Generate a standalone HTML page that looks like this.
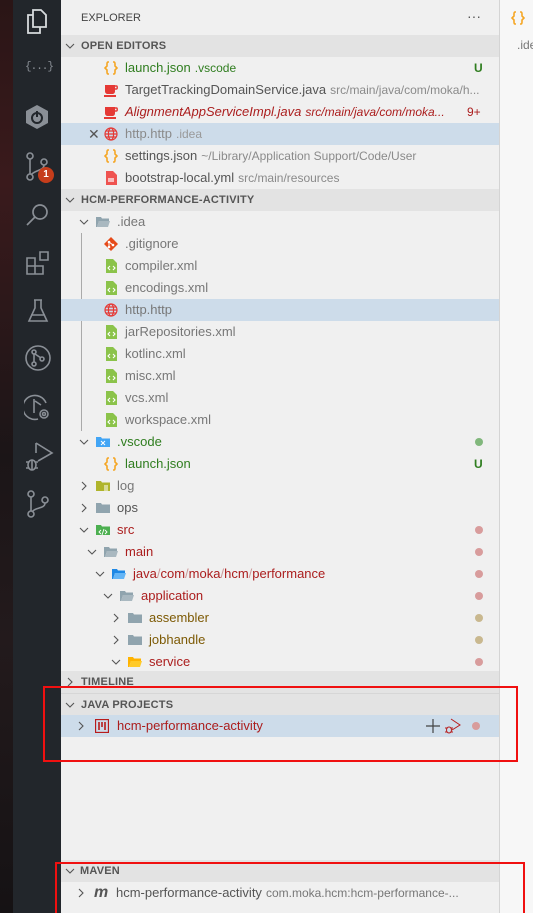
<!DOCTYPE html>
<html><head><meta charset="utf-8"><style>
*{margin:0;padding:0;box-sizing:border-box}
html,body{width:533px;height:913px;overflow:hidden}
body{position:relative;background:#f0f0f0;font-family:"Liberation Sans",Helvetica,sans-serif;font-size:13px;color:#616161}
#strip{position:absolute;left:0;top:0;width:13px;height:913px;background:linear-gradient(180deg,#2a1516 0%,#3a1a1c 20%,#1b1517 50%,#231a1c 70%,#151214 100%)}
#act{position:absolute;left:13px;top:0;width:48px;height:913px;background:#22262b;overflow:hidden}
#side{position:absolute;left:61px;top:0;width:438px;height:913px;background:#f0f0f0}
#edit{position:absolute;left:499px;top:0;width:34px;height:913px;background:#f7f7f7;border-left:1px solid #d4d4d4}
.r{position:absolute;left:61px;width:438px;height:22px;line-height:22px;white-space:nowrap}
.sel{background:#cddcea}
.hd{background:#e3e3e3;font-weight:bold;font-size:11px;color:#555;letter-spacing:.2px}
.ab{position:absolute}
.t{position:absolute;top:0}
.d{color:#8a8a8a;font-size:12px;margin-left:4px}
.dot{position:absolute;left:414px;top:7px;width:8px;height:8px;border-radius:4px}
.g{color:#2f7d1f}.rd{color:#ab1d1d}.ol{color:#7d5a05}
.chev{position:absolute;top:0;width:10px;height:22px}
.ic{position:absolute;top:4px;width:14px;height:14px}
</style></head><body>
<div id="strip"></div>
<div id="act">
<svg class="ab" style="left:12px;top:9px" width="24" height="26" viewBox="0 0 24 26" fill="none" stroke="#d7dadd" stroke-width="1.8"><path d="M8 1h8l5 5v12H8z"/><path d="M8 6H3v18h12v-6"/></svg>
<div class="ab" style="left:12px;top:61px;color:#8a8f96;font-size:11px;font-family:'Liberation Mono',monospace;letter-spacing:-1px">{...}</div>
<svg class="ab" style="left:10px;top:103px" width="28" height="28" viewBox="0 0 28 28"><path d="M14 2l11 6v12l-11 6-11-6V8z" fill="#8a8f96"/><circle cx="14" cy="15" r="5" fill="none" stroke="#22262b" stroke-width="2"/><path d="M14 8v6" stroke="#22262b" stroke-width="2"/></svg>
<svg class="ab" style="left:12px;top:152px" width="26" height="30" viewBox="0 0 26 30" fill="none" stroke="#8a8f96" stroke-width="1.6"><circle cx="5" cy="4" r="3"/><circle cx="5" cy="25" r="3"/><circle cx="19" cy="10" r="3"/><path d="M5 7v15M19 13c0 6-10 5-13 10"/></svg>
<div class="ab" style="left:25px;top:167px;width:16px;height:16px;border-radius:8px;background:#c63d1b;color:#fff;font-size:10px;font-weight:bold;text-align:center;line-height:16px">1</div>
<svg class="ab" style="left:12px;top:202px" width="26" height="26" viewBox="0 0 26 26" fill="none" stroke="#8a8f96" stroke-width="1.7"><circle cx="15" cy="10" r="7"/><path d="M10 15l-8 8"/></svg>
<svg class="ab" style="left:12px;top:250px" width="26" height="26" viewBox="0 0 26 26" fill="none" stroke="#8a8f96" stroke-width="1.6"><path d="M2 8h8v8H2zM10 16h8v8h-8zM2 16h8v8H2zM15 2h8v8h-8z"/></svg>
<svg class="ab" style="left:13px;top:298px" width="24" height="26" viewBox="0 0 24 26" fill="none" stroke="#8a8f96" stroke-width="1.6"><path d="M8 2h8M9 2v8L3 23h18L15 10V2M5 17h14"/></svg>
<svg class="ab" style="left:11px;top:344px" width="28" height="28" viewBox="0 0 28 28" fill="none" stroke="#8a8f96" stroke-width="1.6"><circle cx="14" cy="14" r="12"/><circle cx="10" cy="8" r="2"/><circle cx="10" cy="20" r="2"/><circle cx="18" cy="15" r="2"/><path d="M10 10v8M11 10l6 4"/></svg>
<svg class="ab" style="left:11px;top:393px" width="30" height="30" viewBox="0 0 30 30" fill="none" stroke="#8a8f96" stroke-width="1.6"><path d="M22 10A12 12 0 1 0 14 26"/><path d="M10 6v14M11 8l6 4"/><circle cx="20" cy="21" r="4"/><circle cx="20" cy="21" r="1.5"/></svg>
<svg class="ab" style="left:11px;top:440px" width="30" height="32" viewBox="0 0 30 32" fill="none" stroke="#8a8f96" stroke-width="1.6"><path d="M12 3l16 10-14 8"/><path d="M12 3v10"/><ellipse cx="8" cy="25" rx="4" ry="5"/><path d="M2 22h3M11 22h3M2 28h3M11 28h3M8 20v10"/></svg>
<svg class="ab" style="left:13px;top:490px" width="24" height="28" viewBox="0 0 24 28" fill="none" stroke="#8a8f96" stroke-width="1.6"><circle cx="5" cy="4" r="3"/><circle cx="5" cy="24" r="3"/><circle cx="19" cy="10" r="3"/><path d="M5 7v14M19 13c0 6-10 4-13 9"/></svg>
</div>
<div id="side"></div>
<div id="edit"><svg style="position:absolute;left:11px;top:11px" width="14" height="14" viewBox="0 0 14 14" fill="none" stroke="#f5a623" stroke-width="1.6"><path d="M5 1H4C3 1 3 2 3 3v2L1 7l2 2v2c0 1 0 2 1 2h1M9 1h1c1 0 1 1 1 2v2l2 2-2 2v2c0 1 0 2-1 2H9"/></svg><div style="position:absolute;left:17px;top:38px;font-size:12px;color:#777">.ide</div></div>

<div class="r" style="top:7px"><span class="t" style="left:20px;font-size:11px;color:#444;line-height:22px">EXPLORER</span><span class="t" style="left:406px;color:#555;font-size:14px;line-height:18px">···</span></div>

<svg width="0" height="0" style="position:absolute"><defs>
<symbol id="cd" viewBox="0 0 10 22"><path d="M1 9l4 4 4-4" fill="none" stroke="#555" stroke-width="1.1"/></symbol>
<symbol id="cr" viewBox="0 0 10 22"><path d="M3 7l4 4-4 4" fill="none" stroke="#555" stroke-width="1.1"/></symbol>
<symbol id="js" viewBox="0 0 14 14"><path d="M5 1H4C3 1 3 2 3 3v2L1 7l2 2v2c0 1 0 2 1 2h1M9 1h1c1 0 1 1 1 2v2l2 2-2 2v2c0 1 0 2-1 2H9" fill="none" stroke="#f5a623" stroke-width="1.6"/></symbol>
<symbol id="jv" viewBox="0 0 14 14"><path d="M1 2h10v6c0 2-1 3-3 3H4c-2 0-3-1-3-3z" fill="#e53935"/><path d="M11 3h1.5c1 0 1 3 0 3H11" fill="none" stroke="#e53935" stroke-width="1.4"/><rect x="0" y="12" width="12" height="2" fill="#e53935"/></symbol>
<symbol id="gl" viewBox="0 0 14 14"><g fill="none" stroke="#e53935" stroke-width="1.2"><circle cx="7" cy="7" r="6"/><ellipse cx="7" cy="7" rx="2.6" ry="6"/><path d="M1 7h12M2 4h10M2 10h10"/></g></symbol>
<symbol id="ym" viewBox="0 0 14 14"><path d="M2 0h7l4 4v10H2z" fill="#ef5350"/><path d="M4 8h6M4 10h6" stroke="#fff" stroke-width="1.2"/></symbol>
<symbol id="xm" viewBox="0 0 14 14"><path d="M2 0h7l4 4v10H2z" fill="#8bc34a"/><path d="M6 7l-2 2 2 2M9 7l2 2-2 2" fill="none" stroke="#fff" stroke-width="1.1"/></symbol>
<symbol id="gi" viewBox="0 0 14 14"><path d="M7 0l7 7-7 7-7-7z" fill="#e64a19"/><circle cx="5" cy="5" r="1.3" fill="#fff"/><circle cx="9" cy="8" r="1.3" fill="#fff"/><circle cx="5" cy="10" r="1.3" fill="#fff"/><path d="M5 5v5M5 5l4 3" stroke="#fff" stroke-width="1"/></symbol>
<symbol id="fo" viewBox="0 0 14 14"><path d="M0 2h5l1 1.5h8V12H0z" fill="#90a4ae"/></symbol>
<symbol id="fop" viewBox="0 0 14 14"><path d="M0 2h5l1 1.5h7V6H3L1 12H0z" fill="#90a4ae"/><path d="M3 6h11l-2 6H1z" fill="#a9b8c0"/></symbol>
</defs></svg>

<div class="r hd" style="top:35px"><svg class="chev" style="left:4px"><use href="#cd"/></svg><span class="t" style="left:20px">OPEN EDITORS</span></div>
<div class="r" style="top:57px"><svg class="ic" style="left:43px"><use href="#js"/></svg><span class="t g" style="left:64px">launch.json<span class="d" style="color:#2f7d1f">.vscode</span></span><span class="t" style="left:413px;color:#2f7d1f;font-weight:bold;font-size:12px">U</span></div>
<div class="r" style="top:79px"><svg class="ic" style="left:43px"><use href="#jv"/></svg><span class="t" style="left:64px;color:#555">TargetTrackingDomainService.java<span class="d">src/main/java/com/moka/h...</span></span></div>
<div class="r" style="top:101px"><svg class="ic" style="left:43px"><use href="#jv"/></svg><span class="t rd" style="left:64px;font-style:italic">AlignmentAppServiceImpl.java<span class="d" style="color:#ab1d1d">src/main/java/com/moka...</span></span><span class="t rd" style="left:406px;font-size:12px">9+</span></div>
<div class="r sel" style="top:123px"><span class="t" style="left:27px;font-size:14px;color:#555">✕</span><svg class="ic" style="left:43px"><use href="#gl"/></svg><span class="t" style="left:64px;color:#8a8a8a">http.http<span class="d" style="color:#999">.idea</span></span></div>
<div class="r" style="top:145px"><svg class="ic" style="left:43px"><use href="#js"/></svg><span class="t" style="left:64px;color:#555">settings.json<span class="d">~/Library/Application Support/Code/User</span></span></div>
<div class="r" style="top:167px"><svg class="ic" style="left:43px"><use href="#ym"/></svg><span class="t" style="left:64px;color:#555">bootstrap-local.yml<span class="d">src/main/resources</span></span></div>

<div class="r hd" style="top:189px"><svg class="chev" style="left:4px"><use href="#cd"/></svg><span class="t" style="left:20px">HCM-PERFORMANCE-ACTIVITY</span></div>
<div class="r" style="top:211px"><svg class="chev" style="left:18px"><use href="#cd"/></svg><svg class="ic" style="left:35px"><use href="#fop"/></svg><span class="t" style="left:56px;color:#777">.idea</span></div>
<div style="position:absolute;left:81px;top:233px;width:1px;height:198px;background:#aaa"></div>
<div class="r" style="top:233px"><svg class="ic" style="left:43px"><use href="#gi"/></svg><span class="t" style="left:64px;color:#777">.gitignore</span></div>
<div class="r" style="top:255px"><svg class="ic" style="left:43px"><use href="#xm"/></svg><span class="t" style="left:64px;color:#777">compiler.xml</span></div>
<div class="r" style="top:277px"><svg class="ic" style="left:43px"><use href="#xm"/></svg><span class="t" style="left:64px;color:#777">encodings.xml</span></div>
<div class="r sel" style="top:299px"><svg class="ic" style="left:43px"><use href="#gl"/></svg><span class="t" style="left:64px;color:#777">http.http</span></div>
<div class="r" style="top:321px"><svg class="ic" style="left:43px"><use href="#xm"/></svg><span class="t" style="left:64px;color:#777">jarRepositories.xml</span></div>
<div class="r" style="top:343px"><svg class="ic" style="left:43px"><use href="#xm"/></svg><span class="t" style="left:64px;color:#777">kotlinc.xml</span></div>
<div class="r" style="top:365px"><svg class="ic" style="left:43px"><use href="#xm"/></svg><span class="t" style="left:64px;color:#777">misc.xml</span></div>
<div class="r" style="top:387px"><svg class="ic" style="left:43px"><use href="#xm"/></svg><span class="t" style="left:64px;color:#777">vcs.xml</span></div>
<div class="r" style="top:409px"><svg class="ic" style="left:43px"><use href="#xm"/></svg><span class="t" style="left:64px;color:#777">workspace.xml</span></div>
<div class="r" style="top:431px"><svg class="chev" style="left:18px"><use href="#cd"/></svg><svg class="ic" style="left:35px"><path d="M0 2h5l1 1.5h8V12H0z" fill="#42a5f5"/><path d="M5 6l4 4M9 6l-4 4" stroke="#fff" stroke-width="1"/></svg><span class="t g" style="left:56px">.vscode</span><span class="dot" style="background:#81b77c"></span></div>
<div class="r" style="top:453px"><svg class="ic" style="left:43px"><use href="#js"/></svg><span class="t g" style="left:64px">launch.json</span><span class="t" style="left:413px;color:#2f7d1f;font-weight:bold;font-size:12px">U</span></div>
<div class="r" style="top:475px"><svg class="chev" style="left:18px"><use href="#cr"/></svg><svg class="ic" style="left:35px"><path d="M0 2h5l1 1.5h8V12H0z" fill="#afb42b"/><path d="M8 7h4M8 9h4M8 11h4" stroke="#fff" stroke-width=".9"/></svg><span class="t" style="left:56px;color:#777">log</span></div>
<div class="r" style="top:497px"><svg class="chev" style="left:18px"><use href="#cr"/></svg><svg class="ic" style="left:35px"><use href="#fo"/></svg><span class="t" style="left:56px;color:#555">ops</span></div>
<div class="r" style="top:519px"><svg class="chev" style="left:18px"><use href="#cd"/></svg><svg class="ic" style="left:35px"><path d="M0 2h5l1 1.5h8V12H0z" fill="#4caf50"/><path d="M5 7l-2 2 2 2M9 7l2 2-2 2M8 6l-2 6" fill="none" stroke="#fff" stroke-width=".9"/></svg><span class="t rd" style="left:56px">src</span><span class="dot" style="background:#d89c9c"></span></div>
<div class="r" style="top:541px"><svg class="chev" style="left:26px"><use href="#cd"/></svg><svg class="ic" style="left:43px"><use href="#fop"/></svg><span class="t rd" style="left:64px">main</span><span class="dot" style="background:#d89c9c"></span></div>
<div class="r" style="top:563px"><svg class="chev" style="left:34px"><use href="#cd"/></svg><svg class="ic" style="left:51px"><path d="M0 2h5l1 1.5h7V6H3L1 12H0z" fill="#1e88e5"/><path d="M3 6h11l-2 6H1z" fill="#64b5f6"/></svg><span class="t rd" style="left:72px">java<span style="color:#c99">/</span>com<span style="color:#c99">/</span>moka<span style="color:#c99">/</span>hcm<span style="color:#c99">/</span>performance</span><span class="dot" style="background:#d89c9c"></span></div>
<div class="r" style="top:585px"><svg class="chev" style="left:42px"><use href="#cd"/></svg><svg class="ic" style="left:59px"><use href="#fop"/></svg><span class="t rd" style="left:80px">application</span><span class="dot" style="background:#d89c9c"></span></div>
<div class="r" style="top:607px"><svg class="chev" style="left:50px"><use href="#cr"/></svg><svg class="ic" style="left:67px"><use href="#fo"/></svg><span class="t ol" style="left:88px">assembler</span><span class="dot" style="background:#c9b88f"></span></div>
<div class="r" style="top:629px"><svg class="chev" style="left:50px"><use href="#cr"/></svg><svg class="ic" style="left:67px"><use href="#fo"/></svg><span class="t ol" style="left:88px">jobhandle</span><span class="dot" style="background:#c9b88f"></span></div>
<div class="r" style="top:651px"><svg class="chev" style="left:50px"><use href="#cd"/></svg><svg class="ic" style="left:67px"><path d="M0 2h5l1 1.5h7V6H3L1 12H0z" fill="#ffb300"/><path d="M3 6h11l-2 6H1z" fill="#ffca28"/></svg><span class="t rd" style="left:88px">service</span><span class="dot" style="background:#d89c9c"></span></div>

<div class="r hd" style="top:671px;height:22px"><svg class="chev" style="left:4px"><use href="#cr"/></svg><span class="t" style="left:20px">TIMELINE</span></div>
<div class="r hd" style="top:693px;border-top:1px solid #d6d6d6"><svg class="chev" style="left:4px"><use href="#cd"/></svg><span class="t" style="left:20px">JAVA PROJECTS</span></div>
<div class="r sel" style="top:715px"><svg class="chev" style="left:15px"><use href="#cr"/></svg><svg class="ic" style="left:34px;top:4px"><rect x=".5" y=".5" width="13" height="13" fill="none" stroke="#b71c1c" stroke-width="1.3"/><path d="M4 3v8M7 3v5M10 3v8" stroke="#b71c1c" stroke-width="1.6"/></svg><span class="t rd" style="left:56px">hcm-performance-activity</span>
<svg class="ab" style="left:365px;top:4px" width="14" height="14"><path d="M7 0v14M0 7h14" stroke="#444" stroke-width="1.2"/></svg>
<svg class="ab" style="left:384px;top:3px" width="16" height="16" fill="none" stroke="#b71c1c" stroke-width="1"><path d="M6 1l9 6-8 5"/><ellipse cx="4" cy="12" rx="2.5" ry="3"/><path d="M0 10h2M6 10h2M0 14h2M6 14h2"/></svg>
<span class="dot" style="left:411px;background:#d89c9c"></span></div>

<div class="r hd" style="top:860px"><svg class="chev" style="left:4px"><use href="#cd"/></svg><span class="t" style="left:19px">MAVEN</span></div>
<div class="r" style="top:882px"><svg class="chev" style="left:15px"><use href="#cr"/></svg><span class="t" style="left:33px;font-weight:bold;font-style:italic;font-size:16px;color:#555">m</span><span class="t" style="left:55px;color:#555">hcm-performance-activity<span class="d" style="color:#777">com.moka.hcm:hcm-performance-...</span></span></div>

<div style="position:absolute;left:43px;top:686px;width:475px;height:76px;border:2px solid #f01010"></div>
<div style="position:absolute;left:55px;top:862px;width:470px;height:51px;border:2px solid #f01010;border-bottom:none"></div>
</body></html>
